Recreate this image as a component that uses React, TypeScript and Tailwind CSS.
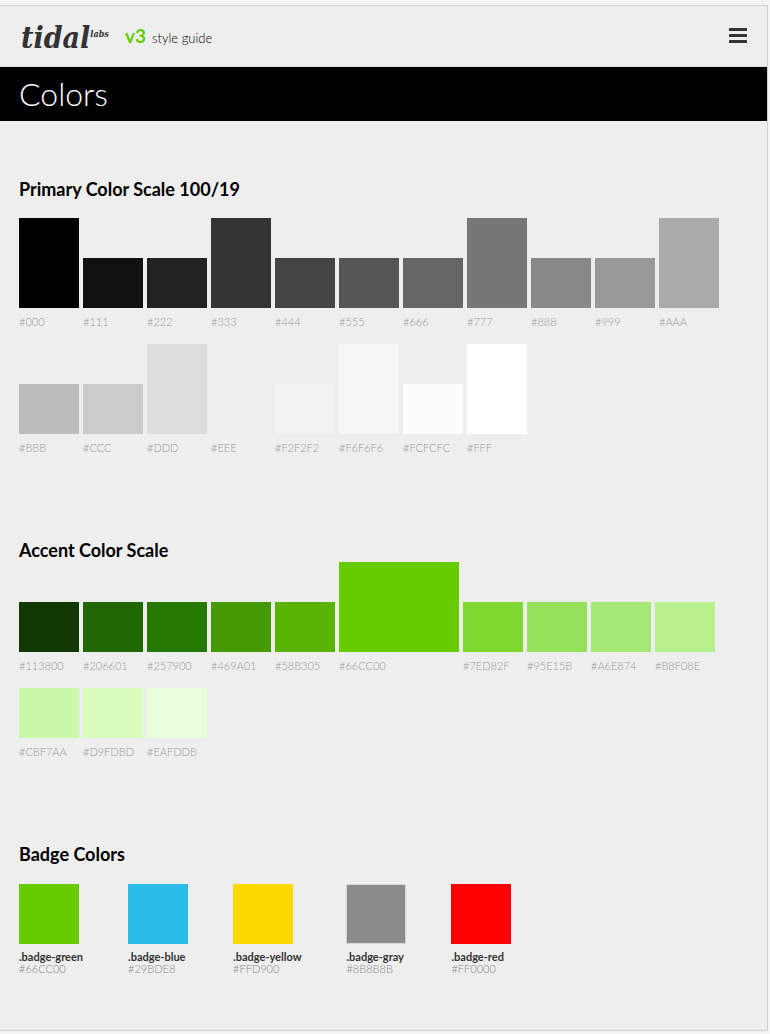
type Swatch = { hex: string; fill: string; size?: string };
type Badge = { name: string; hex: string; fill: string };

const SMALL = 'h-[50px] w-[60px]';
const TALL = 'h-[90px] w-[60px]';
const WIDE = 'h-[90px] w-[120px]';

const primary: Swatch[] = [
  { hex: '#000', fill: 'bg-[#000]', size: TALL },
  { hex: '#111', fill: 'bg-[#111]' },
  { hex: '#222', fill: 'bg-[#222]' },
  { hex: '#333', fill: 'bg-[#333]', size: TALL },
  { hex: '#444', fill: 'bg-[#444]' },
  { hex: '#555', fill: 'bg-[#555]' },
  { hex: '#666', fill: 'bg-[#666]' },
  { hex: '#777', fill: 'bg-[#777]', size: TALL },
  { hex: '#888', fill: 'bg-[#888]' },
  { hex: '#999', fill: 'bg-[#999]' },
  { hex: '#AAA', fill: 'bg-[#aaa]', size: TALL },
  { hex: '#BBB', fill: 'bg-[#bbb]' },
  { hex: '#CCC', fill: 'bg-[#ccc]' },
  { hex: '#DDD', fill: 'bg-[#ddd]', size: TALL },
  { hex: '#EEE', fill: 'bg-[#eee]' },
  { hex: '#F2F2F2', fill: 'bg-[#f2f2f2]' },
  { hex: '#F6F6F6', fill: 'bg-[#f6f6f6]', size: TALL },
  { hex: '#FCFCFC', fill: 'bg-[#fcfcfc]' },
  { hex: '#FFF', fill: 'bg-[#fff]', size: TALL },
];

const accent: Swatch[] = [
  { hex: '#113800', fill: 'bg-[#113800]' },
  { hex: '#206601', fill: 'bg-[#206601]' },
  { hex: '#257900', fill: 'bg-[#257900]' },
  { hex: '#469A01', fill: 'bg-[#469a01]' },
  { hex: '#58B305', fill: 'bg-[#58b305]' },
  { hex: '#66CC00', fill: 'bg-[#66cc00]', size: WIDE },
  { hex: '#7ED82F', fill: 'bg-[#7ed82f]' },
  { hex: '#95E15B', fill: 'bg-[#95e15b]' },
  { hex: '#A6E874', fill: 'bg-[#a6e874]' },
  { hex: '#B8F08E', fill: 'bg-[#b8f08e]' },
  { hex: '#CBF7AA', fill: 'bg-[#cbf7aa]' },
  { hex: '#D9FDBD', fill: 'bg-[#d9fdbd]' },
  { hex: '#EAFDDB', fill: 'bg-[#eafddb]' },
];

const badges: Badge[] = [
  { name: '.badge-green', hex: '#66CC00', fill: 'bg-[#66cc00]' },
  { name: '.badge-blue', hex: '#29BDE8', fill: 'bg-[#29bde8]' },
  { name: '.badge-yellow', hex: '#FFD900', fill: 'bg-[#ffd900]' },
  { name: '.badge-gray', hex: '#8B8B8B', fill: 'bg-[#8b8b8b] border border-[#d5d5d5]' },
  { name: '.badge-red', hex: '#FF0000', fill: 'bg-[#ff0000]' },
];

function Scale({ swatches }: { swatches: Swatch[] }) {
  return (
    <ul className="flex flex-wrap items-end gap-x-1">
      {swatches.map((s) => (
        <li key={s.hex} className="pb-4">
          <div className={`${s.size ?? SMALL} ${s.fill}`} />
          <p className="mt-2 text-[11px] leading-3 font-light text-[#999]">{s.hex}</p>
        </li>
      ))}
    </ul>
  );
}

function Heading({ children }: { children: string }) {
  return <h2 className="text-lg leading-6 font-bold text-black">{children}</h2>;
}

export default function App() {
  return (
    <div className="bg-[#f4f4f4] pt-[5px] pr-0.5 pb-[3px] font-['Lato',sans-serif]">
      <div className="border-y border-r border-[#d2d2d2] bg-[#eee]">
        <header className="flex h-[61px] items-center justify-between border-b border-[#ddd] pr-5 pl-[21px]">
          <div className="flex items-center gap-4">
            <a
              href="#"
              className="flex items-start pt-1 font-['DejaVu_Serif_Condensed','DejaVu_Serif',serif] font-bold text-[#333] italic"
            >
              <span className="text-3xl leading-8">tidal</span>
              <span className="pt-1.5 text-[9px] leading-3">labs</span>
            </a>
            <p className="flex items-baseline gap-1.5 text-[13px] font-light text-black">
              <span className="text-[19px] leading-6 font-bold text-[#66cc00]">v3</span>
              style guide
            </p>
          </div>
          <button type="button" aria-label="Menu" className="text-[#333]">
            <svg width="18" height="18" viewBox="0 0 18 18" fill="currentColor" aria-hidden="true">
              <rect y="1" width="18" height="3" rx="0.5" />
              <rect y="7" width="18" height="3" rx="0.5" />
              <rect y="13" width="18" height="3" rx="0.5" />
            </svg>
          </button>
        </header>

        <h1 className="bg-black px-[19px] py-[7px] text-[32px] leading-10 font-light text-white">Colors</h1>

        <main className="pr-5 pb-[55px] pl-[19px]">
          <section className="pt-14">
            <Heading>Primary Color Scale 100/19</Heading>
            <div className="mt-[17px]">
              <Scale swatches={primary} />
            </div>
          </section>

          <section className="pt-[68px]">
            <Heading>Accent Color Scale</Heading>
            <Scale swatches={accent} />
          </section>

          <section className="pt-[68px]">
            <Heading>Badge Colors</Heading>
            <ul className="mt-[18px] flex flex-wrap gap-x-[45px] gap-y-4">
              {badges.map((b) => (
                <li key={b.name}>
                  <div className={`size-[60px] ${b.fill}`} />
                  <p className="mt-1.5 text-[11px] leading-[13px] font-bold text-[#333]">{b.name}</p>
                  <p className="text-[11px] leading-3 font-light text-[#888]">{b.hex}</p>
                </li>
              ))}
            </ul>
          </section>
        </main>
      </div>
    </div>
  );
}
